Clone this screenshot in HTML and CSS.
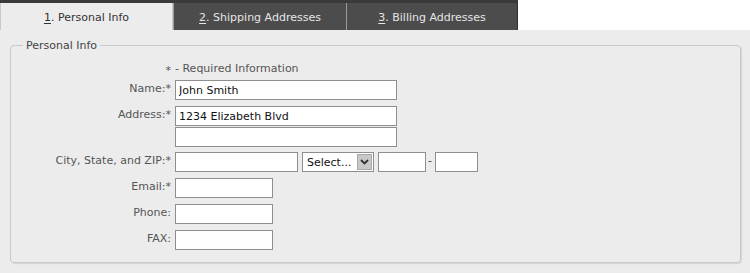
FILE: index.html
```html
<!DOCTYPE html>
<html>
<head lang="en">
    <meta charset="UTF-8">
    <title>Personal Info</title>
    <link rel="stylesheet" href="styles.css">
</head>
<body>
<div class="tabs">
    <div class="tab active"><u>1</u>. Personal Info</div>
    <div class="tab"><u>2</u>. Shipping Addresses</div>
    <div class="tab"><u>3</u>. Billing Addresses</div>
</div>
<div class="panel">
    <fieldset class="group">
        <legend>Personal Info</legend>
        <div class="row note">
            <span class="label">*</span>
            <span>- Required Information</span>
        </div>
        <div class="row">
            <span class="label">Name:*</span>
            <input class="wide" type="text" value="John Smith">
        </div>
        <div class="row tight">
            <span class="label">Address:*</span>
            <input class="wide" type="text" value="1234 Elizabeth Blvd">
        </div>
        <div class="row close">
            <span class="label"></span>
            <input class="wide" type="text">
        </div>
        <div class="row">
            <span class="label">City, State, and ZIP:*</span>
            <input class="city" type="text">
            <span class="select">Select...<i class="arrow"><svg width="9" height="6" viewBox="0 0 9 6"><path d="M1 1 L4.5 4.5 L8 1" fill="none" stroke="#333" stroke-width="1.8"/></svg></i></span>
            <input class="zip" type="text">
            <span class="dash">-</span>
            <input class="zip4" type="text">
        </div>
        <div class="row">
            <span class="label">Email:*</span>
            <input class="short" type="text">
        </div>
        <div class="row">
            <span class="label">Phone:</span>
            <input class="short" type="text">
        </div>
        <div class="row">
            <span class="label">FAX:</span>
            <input class="short" type="text">
        </div>
    </fieldset>
</div>
</body>
</html>
```

FILE: styles.css
```css
*{
    padding: 0;
    margin: 0;
    box-sizing: border-box;
}
body{
    width: 750px;
    height: 273px;
    background: #fff;
    font-family: "DejaVu Sans", Verdana, sans-serif;
    font-size: 11px;
    color: #444;
    overflow: hidden;
}
.tabs{
    display: flex;
    height: 30px;
    width: 518px;
    background: #3a3a3a;
    padding-top: 3px;
}
.tab{
    width: 173px;
    height: 27px;
    line-height: 29px;
    text-align: center;
    font-size: 11px;
    color: #e6e6e6;
    background: #4c4c4c;
    border-left: 1px solid #9a9a9a;
}
.tab:last-child{
    width: 172px;
    border-right: 1px solid #2f2f2f;
}
.tab.active{
    background: #ececec;
    color: #333;
    border-left: 1px solid #c8c8c8;
    border-right: 1px solid #c8c8c8;
    width: 173px;
}
.tab u{
    text-underline-offset: 2px;
}
.panel{
    background: #ececec;
    height: 243px;
    padding: 9px 9px 0 10px;
}
.group{
    border: 1px solid #c9c9c9;
    border-radius: 4px;
    height: 224px;
    padding: 10px 0 0 0;
    box-shadow: 1px 1px 1px #d4d4d4;
}
.group legend{
    margin-left: 12px;
    padding: 0 3px;
    font-size: 11px;
    color: #444;
}
.row{
    display: flex;
    align-items: flex-start;
    gap: 4px;
    margin-bottom: 6px;
    height: 20px;
}
.row.tight{
    margin-bottom: 1px;
}
.row.close{
    margin-bottom: 5px;
}
.note{
    height: 14px;
    margin-bottom: 4px;
    color: #555;
}
.label{
    width: 160px;
    text-align: right;
    color: #555;
    font-size: 11px;
    padding-top: 2px;
}
input{
    height: 20px;
    border: 1px solid #8e8e8e;
    background: #fff;
    font-family: "DejaVu Sans", Verdana, sans-serif;
    font-size: 11px;
    color: #111;
    padding: 0 3px;
}
.wide{
    width: 222px;
}
.city{
    width: 123px;
}
.select{
    display: flex;
    align-items: center;
    justify-content: space-between;
    width: 72px;
    height: 20px;
    border: 1px solid #8e8e8e;
    background: #fff;
    padding: 0 1px 0 4px;
    font-size: 11px;
    color: #111;
}
.arrow{
    display: flex;
    align-items: center;
    justify-content: center;
    width: 15px;
    height: 16px;
    background: #c8c8c8;
    border: 1px solid #a9a9a9;
}
.zip{
    width: 48px;
}
.dash{
    margin: 0 -1px 0 -2px;
    padding-top: 2px;
}
.zip4{
    width: 43px;
}
.short{
    width: 98px;
}
```
